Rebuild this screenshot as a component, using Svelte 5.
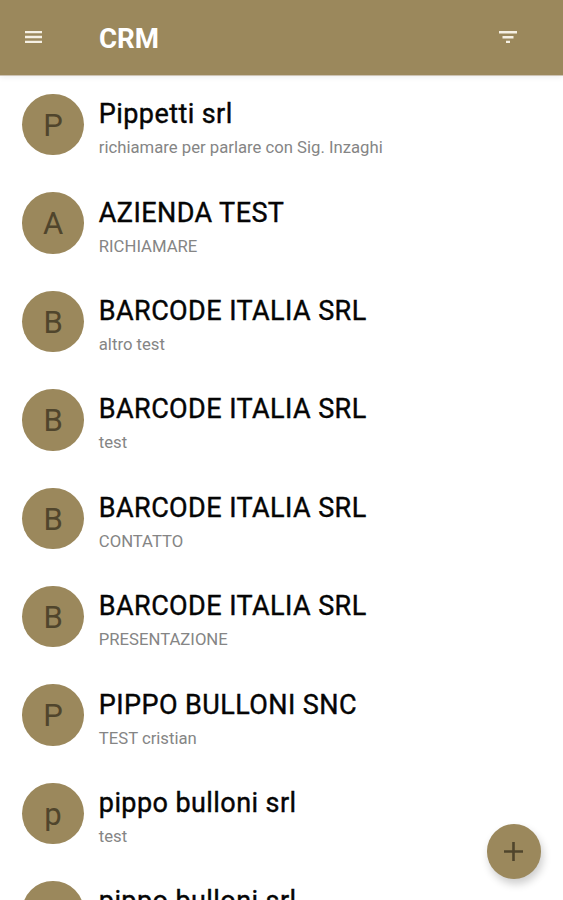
<script>
	const contacts = [
		{ name: 'Pippetti srl', note: 'richiamare per parlare con Sig. Inzaghi' },
		{ name: 'AZIENDA TEST', note: 'RICHIAMARE' },
		{ name: 'BARCODE ITALIA SRL', note: 'altro test' },
		{ name: 'BARCODE ITALIA SRL', note: 'test' },
		{ name: 'BARCODE ITALIA SRL', note: 'CONTATTO' },
		{ name: 'BARCODE ITALIA SRL', note: 'PRESENTAZIONE' },
		{ name: 'PIPPO BULLONI SNC', note: 'TEST cristian' },
		{ name: 'pippo bulloni srl', note: 'test' },
		{ name: 'pippo bulloni srl', note: '' },
	];
</script>

<div class="app">
	<header>
		<button class="menu" aria-label="Menu">
			<svg width="17" height="12" viewBox="0 0 17 12"><path d="M0 0h17v2.3H0zM0 4.8h17v2.4H0zM0 9.7h17V12H0z" fill="currentColor" /></svg>
		</button>
		<h1>CRM</h1>
		<button class="filter" aria-label="Filter">
			<svg width="18" height="12" viewBox="0 0 18 12"><path d="M0 0h18v2.6H0zM3.5 5h11v2.6h-11zM7 9.8h4V12H7z" fill="currentColor" /></svg>
		</button>
	</header>

	<ul>
		{#each contacts as contact}
			<li>
				<span class="avatar">{contact.name[0]}</span>
				<div class="text">
					<h2>{contact.name}</h2>
					<p>{contact.note}</p>
				</div>
			</li>
		{/each}
	</ul>

	<button class="fab" aria-label="Add">
		<svg width="19" height="19" viewBox="0 0 19 19"><path d="M8.2 0h2.6v8.2H19v2.6h-8.2V19H8.2v-8.2H0V8.2h8.2z" fill="currentColor" /></svg>
	</button>
</div>

<style>
	:global(body) {
		margin: 0;
		background: #fff;
	}

	.app {
		position: relative;
		height: 900px;
		overflow: hidden;
		font-family: Roboto, sans-serif;
	}

	header {
		display: flex;
		align-items: center;
		height: 75px;
		box-sizing: border-box;
		padding: 0 46px 0 25px;
		background: #9b885c;
		color: #fff;
		box-shadow: 0 1px 0 #cdc3b3, 0 2px 6px rgba(0, 0, 0, 0.08);
	}

	button {
		display: flex;
		align-items: center;
		justify-content: center;
		padding: 0;
		border: none;
		background: none;
		color: inherit;
		cursor: pointer;
	}

	header button {
		padding-bottom: 1px;
		color: #f5f0e4;
	}

	h1 {
		flex: 1;
		margin: 2px 0 0 57px;
		font-size: 27.7px;
		line-height: 32px;
		font-weight: 700;
	}

	ul {
		margin: 0;
		padding: 0;
		list-style: none;
	}

	li {
		display: flex;
		align-items: center;
		height: 98.4px;
		padding-left: 22.3px;
	}

	.avatar {
		flex: none;
		width: 61.5px;
		height: 61.5px;
		margin: 1px 15px 0 0;
		border-radius: 50%;
		background: #9b885c;
		color: #50452c;
		font-size: 31px;
		line-height: 64px;
		text-align: center;
	}

	.text {
		padding-top: 9px;
		white-space: nowrap;
	}

	h2 {
		margin: 0;
		font-size: 27px;
		line-height: 34px;
		font-weight: 400;
		letter-spacing: 0.42px;
		-webkit-text-stroke: 0.4px #050505;
		color: #050505;
	}

	p {
		height: 24px;
		margin: 5px 0 0;
		font-size: 16.7px;
		line-height: 24px;
		color: #858585;
	}

	.fab {
		position: absolute;
		right: 22px;
		bottom: 21.5px;
		width: 54.5px;
		height: 54.5px;
		border-radius: 50%;
		background: #9b885c;
		color: #50452c;
		box-shadow: 2px 5px 9px rgba(0, 0, 0, 0.2);
	}
</style>
